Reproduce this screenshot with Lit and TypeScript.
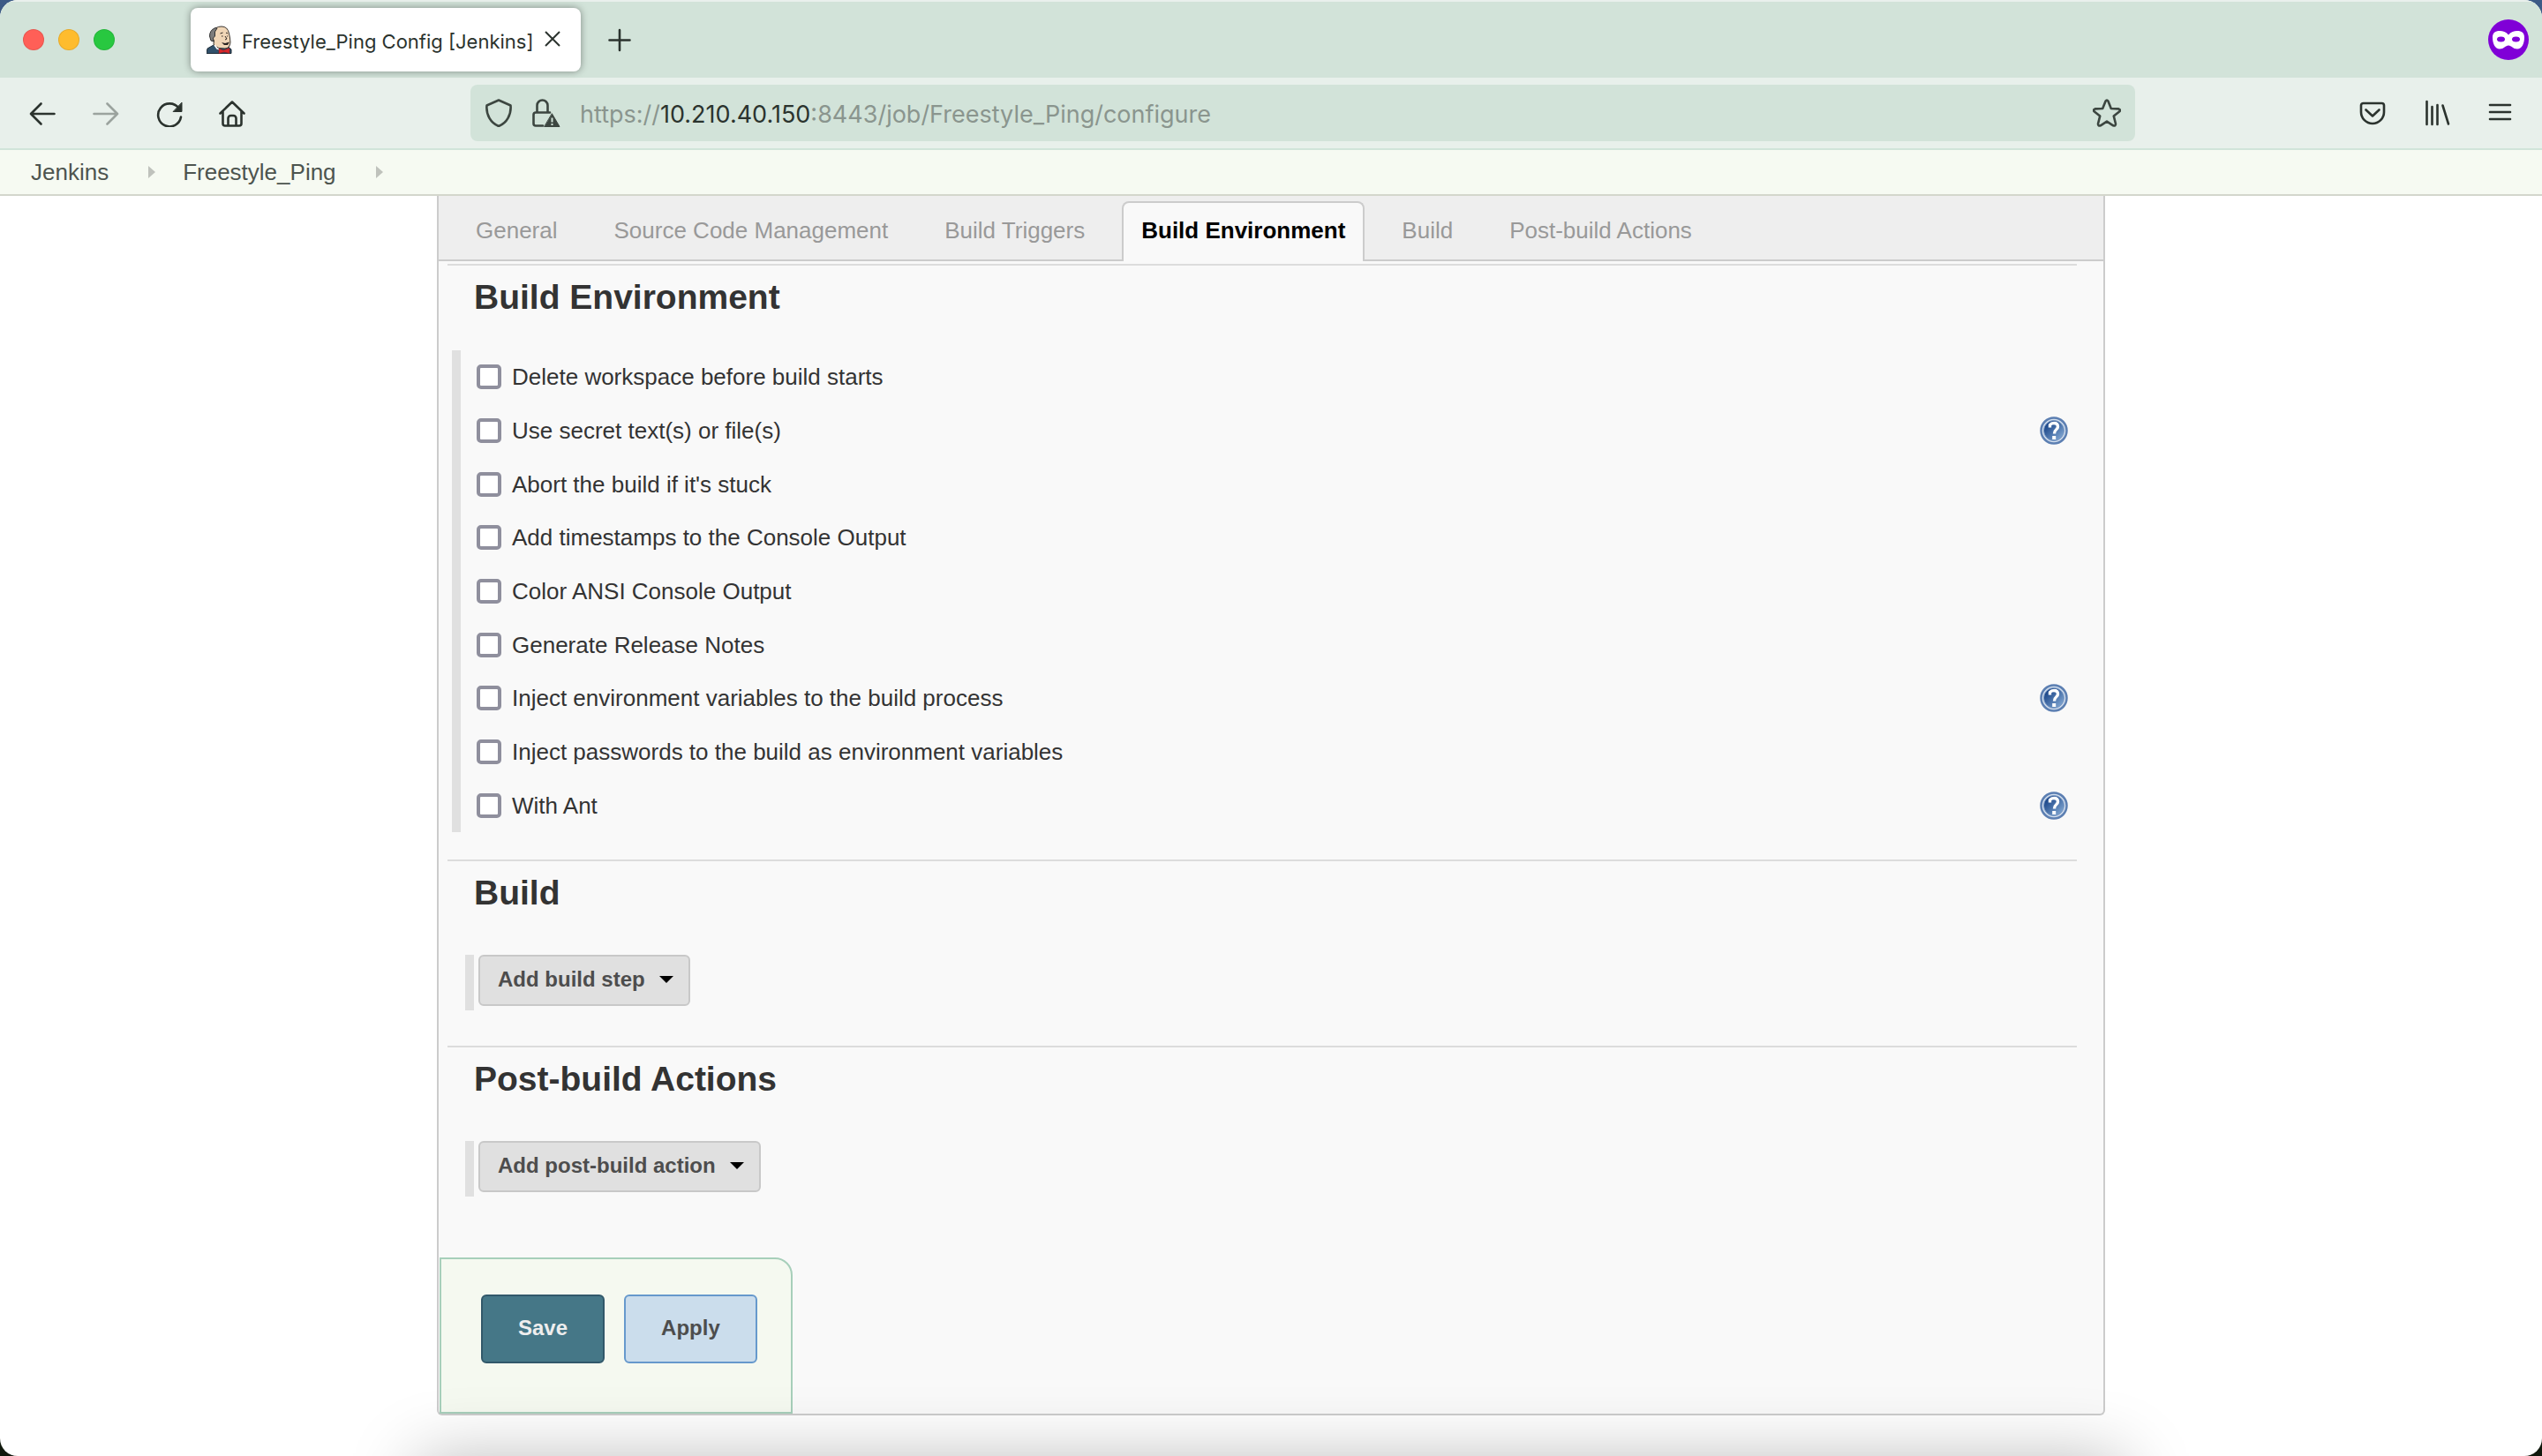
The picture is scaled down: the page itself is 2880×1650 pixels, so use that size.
import { LitElement, html, css, svg, nothing } from "lit";
import { customElement, property } from "lit/decorators.js";
import { classMap } from "lit/directives/class-map.js";

const icons = {
  back: svg`<path d="M29.5 17H3M14.5 5.5L3 17l11.5 11.5"/>`,
  forward: svg`<path d="M2.5 17H29M17.5 5.5L29 17L17.5 28.5"/>`,
  reload: svg`<path d="M26.5 10.5A13 13 0 1 0 29 20.5"/><path class="fill" d="M30 4.5V14.5H20.5Z"/>`,
  home: svg`<path d="M1.5 16.5L15 3.5L28.5 16.5M4.5 14V28a2.5 2.5 0 0 0 2.5 2.5H23a2.5 2.5 0 0 0 2.5-2.5V14M10.5 30V22a3 3 0 0 1 3-3h3a3 3 0 0 1 3 3V30"/>`,
  shield: svg`<path d="M16 1.5L29.5 7.5C30.5 18 25 27.5 16 31C7 27.5 1.5 18 2.5 7.5Z"/>`,
  lock: svg`<path d="M5.5 15.5V7.5a6 6 0 0 1 12 0v8M20 15.5H4a2.5 2.5 0 0 0-2.5 2.5V28a2.5 2.5 0 0 0 2.5 2.5H12"/><path class="fill" d="M22.5 17L31 31.5H14Z"/><path class="notch" d="M22.5 21.5V26.5M22.5 28V30"/>`,
  star: svg`<path d="M14.6 2.6Q16 0.6 17.4 2.6L20.8 11L29.4 11.4Q32 12.2 30.4 14.3L23.8 19.6L26 28.2Q26 31.2 23.2 30.3L16 25.6L8.8 30.3Q6 31.2 6 28.2L8.2 19.6L1.6 14.3Q0 12.2 2.6 11.4L11.2 11Z"/>`,
  pocket: svg`<path d="M5.5 5h21A2.5 2.5 0 0 1 29 7.5V15A13 13 0 0 1 3 15V7.5A2.5 2.5 0 0 1 5.5 5ZM8.5 12.5L16 19.5L23.5 12.5"/>`,
  library: svg`<path d="M5.5 3V29M11.5 9V29M17.5 7V29M23.5 7.5L30 28.5"/>`,
  menu: svg`<path d="M5 7H28M5 15H28M5 23H28"/>`,
  plus: svg`<path d="M16 5V28M4.5 16.5H27.5"/>`,
};

const icon = (name: keyof typeof icons) => html`
  <svg class="icon" viewBox="0 0 32 32" stroke-width="2.6" aria-hidden="true">${icons[name]}</svg>
`;

const iconStyles = css`
  .icon {
    display: block;
    width: 32px;
    height: 32px;
    fill: none;
    stroke: currentColor;
    stroke-linecap: round;
    stroke-linejoin: round;
  }
  .icon .fill {
    fill: currentColor;
    stroke-width: 1;
  }
  .icon .notch {
    stroke: #d2e3d9;
    stroke-width: 2;
    stroke-linecap: butt;
  }
  button {
    font: inherit;
    color: inherit;
    margin: 0;
    padding: 0;
    border: 0;
    background: none;
  }
`;

@customElement("browser-chrome")
class BrowserChrome extends LitElement {
  static styles = [
    iconStyles,
    css`
      :host {
        display: block;
        font-family: Inter, "Liberation Sans", sans-serif;
        color: #2b332e;
      }
      .strip {
        display: flex;
        align-items: center;
        height: 88px;
        box-sizing: border-box;
        padding: 0 15px 0 26px;
        background: #d2e3d9;
        border-top: 2px solid #e9f0ec;
      }
      .lights {
        display: flex;
        gap: 16px;
        margin-right: 86px;
      }
      .light {
        width: 24px;
        height: 24px;
        border-radius: 50%;
        box-sizing: border-box;
        border: 1px solid #00000018;
      }
      .close { background: #ff5f57; }
      .minimise { background: #febc2e; }
      .zoom { background: #28c840; }
      .tab {
        display: flex;
        align-items: center;
        width: 442px;
        height: 72px;
        box-sizing: border-box;
        padding: 0 22px 0 18px;
        border-radius: 8px;
        background: #fff;
        box-shadow: 0 0 8px #00000066;
      }
      .favicon {
        width: 32px;
        height: 32px;
        margin-right: 8px;
        flex: none;
      }
      .title {
        flex: 1;
        font-size: 22px;
        line-height: 32px;
        white-space: nowrap;
        padding-top: 3px;
      }
      .shut {
        width: 20px;
        height: 20px;
        fill: none;
        stroke: currentColor;
        stroke-width: 2;
        display: block;
      }
      .new {
        margin-left: 28px;
        flex: none;
      }
      .mask {
        width: 46px;
        height: 46px;
        margin-left: auto;
      }
      .bar {
        display: flex;
        align-items: center;
        justify-content: space-between;
        height: 82px;
        box-sizing: border-box;
        padding: 0 32px;
        background: #e8f0eb;
        border-bottom: 2px solid #d0e4d9;
      }
      .group {
        display: flex;
        gap: 40px;
      }
      .dim { opacity: 0.4; }
      .address {
        flex: 0 1 1886px;
        display: flex;
        align-items: center;
        gap: 22px;
        height: 64px;
        box-sizing: border-box;
        padding: 0 16px;
        border-radius: 8px;
        background: #d2e3d9;
        color: #3c4640;
      }
      .url {
        flex: 1;
        padding-top: 3px;
        font-size: 27px;
        line-height: 36px;
        white-space: nowrap;
        color: #8a958e;
        outline: none;
      }
      .host { color: #2b332e; }
    `,
  ];

  render() {
    return html`
      <header>
        <div class="strip">
          <div class="lights">
            <button class="light close" aria-label="Close window"></button>
            <button class="light minimise" aria-label="Minimise window"></button>
            <button class="light zoom" aria-label="Zoom window"></button>
          </div>
          <div class="tab">
            <svg class="favicon" viewBox="0 0 32 32" aria-hidden="true">
              <path d="M0 31.5L1 26L8 22L13 24L25 24.5L28 27V31.5Z" fill="#31516b" stroke="#1c2a36" />
              <path d="M8 21L8.500 17L6 14L7 7Q10 1 17 1Q24 1 25.500 9L26.500 14L27 19Q26.500 25.500 21 26L14 25.500Q9.500 24 8 21Z" fill="#f0d6b7" stroke="#3a342e" />
              <path d="M5 17L3.500 12Q3.500 5 10 2.500L12 3L9.500 7L9.500 12L7.500 14L8 18Z" fill="#7c7c7c" stroke="#333" />
              <path d="M9 22L12 26L15 27" fill="none" stroke="#fff" stroke-width="1.5" />
              <path d="M15.500 9l3-1M22 8l2 1M17 12h1.500M23 12h1M21 12l2 3-2 1" fill="none" stroke="#2c2522" />
              <path d="M17 19L21 20L26 18.500L24 22L20 22Z" fill="#2c2522" />
              <path d="M14 26L19 28L26 25.5V31.5L20 30L14 31.5Z" fill="#d9282b" stroke="#7e1416" stroke-width="0.5" />
            </svg>
            <span class="title">Freestyle_Ping Config [Jenkins]</span>
            <button aria-label="Close tab">
              <svg class="shut" viewBox="0 0 20 20"><path d="M2 1L18 17M18 1L2 17" /></svg>
            </button>
          </div>
          <button class="new" aria-label="New tab">${icon("plus")}</button>
          <svg class="mask" viewBox="0 0 46 46" role="img" aria-label="Private browsing">
            <circle cx="23" cy="23" r="23" fill="#8000d7" />
            <path d="M23 17.5C26 14 29 13 33 13C38 13 41 15.5 41 20C41 28 38 33.5 33 33.5C28 33.5 26.5 29.5 23 29.5C19.5 29.5 18 33.5 13 33.5C8 33.5 5 28 5 20C5 15.5 8 13 13 13C17 13 20 14 23 17.5Z" fill="#fff" />
            <ellipse cx="14.5" cy="22.5" rx="4.5" ry="3" fill="#8000d7" />
            <ellipse cx="31.5" cy="22.5" rx="4.5" ry="3" fill="#8000d7" />
          </svg>
        </div>
        <div class="bar">
          <div class="group">
            <button aria-label="Back">${icon("back")}</button>
            <button class="dim" aria-label="Forward">${icon("forward")}</button>
            <button aria-label="Reload">${icon("reload")}</button>
            <button aria-label="Home">${icon("home")}</button>
          </div>
          <div class="address">
            <button aria-label="Tracking protection">${icon("shield")}</button>
            <button aria-label="Connection not secure">${icon("lock")}</button>
            <div class="url" role="textbox" contenteditable="true" spellcheck="false" aria-label="Address">https://<span class="host">10.210.40.150</span>:8443/job/Freestyle_Ping/configure</div>
            <button aria-label="Bookmark this page">${icon("star")}</button>
          </div>
          <div class="group">
            <button aria-label="Save to Pocket">${icon("pocket")}</button>
            <button aria-label="Library">${icon("library")}</button>
            <button aria-label="Menu">${icon("menu")}</button>
          </div>
        </div>
      </header>
    `;
  }
}

@customElement("config-section")
class ConfigSection extends LitElement {
  @property() heading = "";

  static styles = css`
    :host {
      display: block;
      margin: 0 30px 0 10px;
      border-top: 2px solid #dcdcdc;
    }
    .heading {
      margin: 0;
      padding: 12px 0 2px 30px;
      font-size: 39px;
      line-height: 48px;
      font-weight: bold;
      color: #333;
    }
  `;

  render() {
    return html`
      <section>
        <h2 class="heading">${this.heading}</h2>
        <slot></slot>
      </section>
    `;
  }
}

interface Wrapper {
  id: string;
  label: string;
  help?: boolean;
}

const wrappers: Wrapper[] = [
  { id: "clean", label: "Delete workspace before build starts" },
  { id: "secrets", label: "Use secret text(s) or file(s)", help: true },
  { id: "timeout", label: "Abort the build if it's stuck" },
  { id: "timestamps", label: "Add timestamps to the Console Output" },
  { id: "ansi", label: "Color ANSI Console Output" },
  { id: "notes", label: "Generate Release Notes" },
  { id: "env", label: "Inject environment variables to the build process", help: true },
  { id: "passwords", label: "Inject passwords to the build as environment variables" },
  { id: "ant", label: "With Ant", help: true },
];

const tabs = [
  "General",
  "Source Code Management",
  "Build Triggers",
  "Build Environment",
  "Build",
  "Post-build Actions",
];

@customElement("app-root")
class AppRoot extends LitElement {
  @property() current = "Build Environment";

  static styles = [
    iconStyles,
    css`
      :host {
        display: block;
        background: linear-gradient(#3c5a86, #10180c);
        font-family: "Liberation Sans", Arial, sans-serif;
        font-size: 26px;
        line-height: 30px;
        color: #333;
      }
      .window {
        position: relative;
        display: flex;
        flex-direction: column;
        min-height: 100vh;
        overflow: hidden;
        border-radius: 20px;
        background: #fff;
      }
      a {
        color: inherit;
        text-decoration: none;
      }
      .crumbs {
        display: flex;
        align-items: center;
        height: 52px;
        box-sizing: border-box;
        padding: 0 35px;
        background: #f6faf2;
        border-bottom: 2px solid #d3d6cc;
        color: #4d544f;
      }
      .sep {
        margin: 0 31px 0 45px;
        border: solid transparent;
        border-width: 7px 0 7px 8px;
        border-left-color: #bfc2bc;
      }
      .panel {
        flex: 1;
        display: flex;
        flex-direction: column;
        width: 100%;
        max-width: 1890px;
        box-sizing: border-box;
        margin: 0 auto 46px;
        border: 2px solid #ccc;
        border-top: 0;
        border-radius: 0 0 6px 6px;
        background: #f9f9f9;
      }
      .tabs {
        display: flex;
        gap: 20px;
        padding: 6px 20px 0;
        margin-bottom: 3px;
        background: #eee;
        border-bottom: 2px solid #ccc;
      }
      .tab {
        margin-bottom: -2px;
        padding: 16px 20px 20px;
        border: 2px solid transparent;
        border-bottom: 0;
        border-radius: 8px 8px 0 0;
        color: #999;
      }
      .current {
        border-color: #ccc;
        background: #f9f9f9;
        color: #000;
        font-weight: bold;
      }
      .options {
        display: grid;
        grid-auto-rows: 1fr;
        height: 546px;
        margin: 34px 0 31px 5px;
        padding: 0 10px 0 18px;
        border-left: 10px solid #e0e0e0;
      }
      .option {
        display: flex;
        align-items: center;
        gap: 12px;
      }
      .check {
        appearance: none;
        width: 28px;
        height: 28px;
        box-sizing: border-box;
        margin: 0;
        border: 4px solid #8f8f9d;
        border-radius: 5px;
        background: #fff;
      }
      .help {
        margin-left: auto;
      }
      .question {
        display: block;
        width: 32px;
        height: 32px;
      }
      .adder {
        display: flex;
        height: 63px;
        align-items: flex-start;
        margin: 44px 0 40px 20px;
        padding-left: 5px;
        border-left: 10px solid #e0e0e0;
      }
      .add,
      .action {
        box-sizing: border-box;
        border: 2px solid #c8c8c8;
        border-radius: 6px;
        font-size: 24px;
        line-height: 28px;
        font-weight: bold;
        color: #4d4d4d;
      }
      .add {
        display: flex;
        align-items: center;
        gap: 16px;
        height: 58px;
        padding: 0 17px 2px 20px;
        background: #e0e0e0;
      }
      .caret {
        border: solid transparent;
        border-width: 8px 8px 0;
        border-top-color: #000;
      }
      .footer {
        display: flex;
        align-items: flex-start;
        gap: 22px;
        align-self: flex-start;
        height: 177px;
        box-sizing: border-box;
        margin: auto 0 0 1px;
        padding: 40px 38px 0 45px;
        border: 2px solid #a7cfba;
        border-radius: 0 20px 0 0;
        background: #f5f9f0;
      }
      .action {
        height: 78px;
        padding: 0 40px 2px;
      }
      .save {
        background: #457787;
        border-color: #31586a;
        color: #eee;
      }
      .apply {
        background: #cbddec;
        border-color: #6699cc;
      }
      .glow {
        position: absolute;
        left: 475px;
        right: 475px;
        top: calc(100% + 5px);
        height: 200px;
        pointer-events: none;
        box-shadow: 0 0 80px #00000048;
      }
    `,
  ];

  private renderHelp(option: Wrapper) {
    return html`
      <button class="help" aria-label="Help for ${option.label}">
        <svg class="question" viewBox="0 0 32 32" aria-hidden="true">
          <defs>
            <linearGradient id="ball" x1="0" y1="0" x2="1" y2="1">
              <stop offset="0.2" stop-color="#1f4a8c" />
              <stop offset="1" stop-color="#8fb4dc" />
            </linearGradient>
          </defs>
          <circle cx="16" cy="16" r="14.5" fill="#d3dfee" stroke="#5c7fb2" stroke-width="2.5" />
          <circle cx="16" cy="16" r="11.5" fill="url(#ball)" stroke="#7c9ac4" stroke-width="1" />
          <path d="M11.5 12.5V9.5Q13 7.5 16 7.5Q20.5 7.5 20.5 11.5Q20.5 13.5 18.5 15Q16.5 16.5 16.5 19.5" fill="none" stroke="#fff" stroke-width="3.4" />
          <path d="M14.2 22h4v4h-4z" fill="#fff" />
        </svg>
      </button>
    `;
  }

  private renderAdder(label: string) {
    return html`
      <div class="adder">
        <button class="add" aria-haspopup="menu">${label}<span class="caret"></span></button>
      </div>
    `;
  }

  render() {
    return html`
      <div class="window">
        <browser-chrome></browser-chrome>
        <nav class="crumbs" aria-label="Breadcrumb">
          <a href="#jenkins">Jenkins</a><span class="sep"></span>
          <a href="#job">Freestyle_Ping</a><span class="sep"></span>
        </nav>
        <main class="panel">
          <nav class="tabs" aria-label="Sections">
            ${tabs.map((tab) => html`
              <a class=${classMap({ tab: true, current: tab === this.current })} href="#config">${tab}</a>
            `)}
          </nav>
          <config-section heading="Build Environment">
            <div class="options">
              ${wrappers.map((option) => html`
                <div class="option">
                  <input class="check" type="checkbox" id=${option.id} />
                  <label for=${option.id}>${option.label}</label>
                  ${option.help ? this.renderHelp(option) : nothing}
                </div>
              `)}
            </div>
          </config-section>
          <config-section heading="Build">${this.renderAdder("Add build step")}</config-section>
          <config-section heading="Post-build Actions">${this.renderAdder("Add post-build action")}</config-section>
          <div class="footer">
            <button class="action save">Save</button>
            <button class="action apply">Apply</button>
          </div>
        </main>
        <div class="glow"></div>
      </div>
    `;
  }
}
